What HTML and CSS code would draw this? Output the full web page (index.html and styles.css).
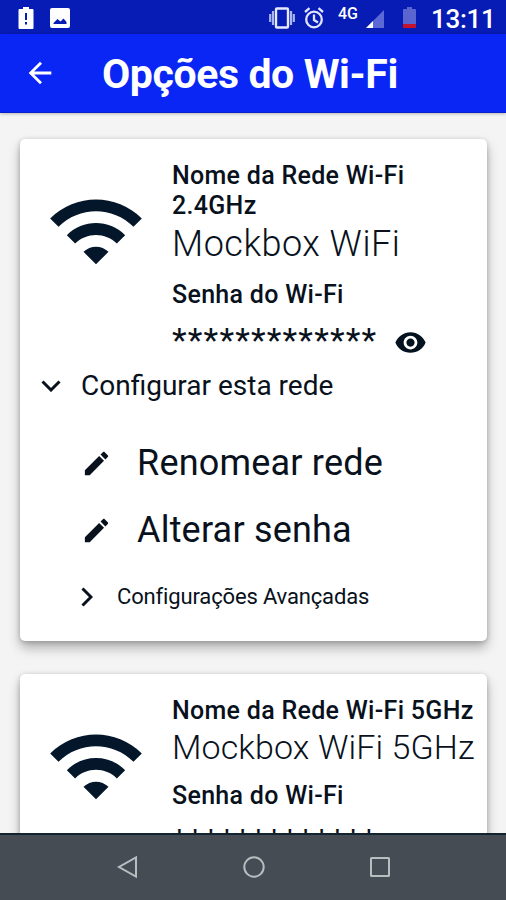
FILE: index.html
```
<!DOCTYPE html>
<html lang="pt-BR">
<head>
    <meta charset="UTF-8">
    <meta name="viewport" content="width=device-width, initial-scale=1.0">
    <title>Opções do Wi-Fi</title>
    <link rel="stylesheet" href="styles.css">
</head>
<body>
    <!-- Status bar -->
    <div class="status-bar">
        <svg class="status-warning" width="16" height="24" viewBox="0 0 16 24">
            <path fill="#fff" fill-rule="evenodd" d="M5 1h6v2h3.500q1 0 1 1v18q0 1-1 1h-13q-1 0-1-1V4q0-1 1-1H5zM7 7v7h2V7zM7 16v2.500h2V16z"/>
        </svg>
        <svg class="status-image" width="20" height="20" viewBox="0 0 20 20">
            <path fill="#fff" fill-rule="evenodd" d="M2 0h16q2 0 2 2v16q0 2-2 2H2q-2 0-2-2V2q0-2 2-2zM3.500 16h13v-2l-3-3.500-3 3-3-2.500-4 4z"/>
        </svg>
        <svg class="status-vibrate" width="26" height="22" viewBox="0 0 26 22">
            <path fill="none" stroke="#a9b6f0" stroke-width="2.200" d="M1.200 7v8M4 4v14M22 4v14M24.800 7v8"/>
            <rect x="7" y="1.500" width="12" height="19" rx="1" fill="none" stroke="#e6eaff" stroke-width="2.400"/>
        </svg>
        <svg class="status-alarm" width="20" height="22" viewBox="0 0 20 22">
            <g fill="none" stroke="#dfe4ff" stroke-width="2.300">
                <circle cx="10" cy="12.500" r="7.800"/>
                <path d="M1 5l4.500-3.800M19 5l-4.500-3.800M10 7.500v5.500l4 2.500"/>
            </g>
        </svg>
        <span class="status-network">4G</span>
        <svg class="status-signal" width="18" height="18" viewBox="0 0 18 18">
            <path fill="#5a69d6" d="M18 0v18H0z"/>
            <path fill="#fff" d="M7 11v7H0z"/>
        </svg>
        <svg class="status-battery" width="13" height="22" viewBox="0 0 13 22">
            <path fill="#5a65cf" d="M4 0h5v2h3q1 0 1 1v14H0V3q0-1 1-1h3z"/>
            <path fill="#c4122f" d="M0 17h13v3q0 1-1 1H1q-1 0-1-1z"/>
        </svg>
        <span class="status-time">13:11</span>
    </div>

    <!-- App bar -->
    <header class="app-bar">
        <svg class="back-icon" width="34" height="34" viewBox="0 0 24 24">
            <path fill="#fff" d="M20 11H7.830l5.590-5.590L12 4l-8 8 8 8 1.410-1.410L7.830 13H20v-2z"/>
        </svg>
        <h1>Opções do Wi-Fi</h1>
    </header>

    <main class="content">
        <section class="card">
            <div class="network">
                <svg class="wifi-icon" width="100" height="100" viewBox="0 0 24 24">
                    <path d="M1 9l2 2c4.970-4.970 13.030-4.970 18 0l2-2C16.930 2.930 7.080 2.930 1 9zm8 8l3 3 3-3c-1.650-1.660-4.340-1.660-6 0zm-4-4l2 2c2.760-2.760 7.240-2.760 10 0l2-2C15.140 9.140 8.870 9.140 5 13z"/>
                </svg>
                <div class="network-info">
                    <p class="label">Nome da Rede Wi-Fi 2.4GHz</p>
                    <p class="value">Mockbox WiFi</p>
                    <p class="label label-password">Senha do Wi-Fi</p>
                    <div class="password">
                        <span class="password-mask">*************</span>
                        <svg class="eye-icon" width="33" height="33" viewBox="0 0 24 24">
                            <path d="M12 4.500C7 4.500 2.730 7.610 1 12c1.730 4.390 6 7.500 11 7.500s9.270-3.110 11-7.500c-1.730-4.390-6-7.500-11-7.500zM12 17c-2.760 0-5-2.240-5-5s2.240-5 5-5 5 2.240 5 5-2.240 5-5 5zm0-8c-1.660 0-3 1.340-3 3s1.340 3 3 3 3-1.340 3-3-1.340-3-3-3z"/>
                        </svg>
                    </div>
                </div>
            </div>

            <div class="config-toggle">
                <svg width="20" height="12" viewBox="0 0 20 12">
                    <path class="chevron" d="M1.500 1.500l8.500 8.500 8.500-8.500"/>
                </svg>
                <span>Configurar esta rede</span>
            </div>

            <ul class="actions">
                <li class="action">
                    <svg width="31" height="31" viewBox="0 0 24 24">
                        <path d="M3 17.250V21h3.750L17.810 9.940l-3.750-3.750L3 17.250zM20.710 7.040c.390-.390.390-1.020 0-1.410l-2.340-2.340c-.390-.390-1.020-.390-1.410 0l-1.830 1.830 3.750 3.750 1.830-1.830z"/>
                    </svg>
                    <span>Renomear rede</span>
                </li>
                <li class="action">
                    <svg width="31" height="31" viewBox="0 0 24 24">
                        <path d="M3 17.250V21h3.750L17.810 9.940l-3.750-3.750L3 17.250zM20.710 7.040c.390-.390.390-1.020 0-1.410l-2.340-2.340c-.390-.390-1.020-.390-1.410 0l-1.830 1.830 3.750 3.750 1.830-1.830z"/>
                    </svg>
                    <span>Alterar senha</span>
                </li>
            </ul>

            <div class="advanced">
                <svg width="12" height="20" viewBox="0 0 12 20">
                    <path class="chevron" d="M1.500 1.500l8.500 8.500-8.500 8.500"/>
                </svg>
                <span>Configurações Avançadas</span>
            </div>
        </section>

        <section class="card">
            <div class="network">
                <svg class="wifi-icon" width="100" height="100" viewBox="0 0 24 24">
                    <path d="M1 9l2 2c4.970-4.970 13.030-4.970 18 0l2-2C16.930 2.930 7.080 2.930 1 9zm8 8l3 3 3-3c-1.650-1.660-4.340-1.660-6 0zm-4-4l2 2c2.760-2.760 7.240-2.760 10 0l2-2C15.140 9.140 8.870 9.140 5 13z"/>
                </svg>
                <div class="network-info">
                    <p class="label">Nome da Rede Wi-Fi 5GHz</p>
                    <p class="value value-long">Mockbox WiFi 5GHz</p>
                    <p class="label label-password">Senha do Wi-Fi</p>
                    <div class="password">
                        <span class="password-mask">*************</span>
                        <svg class="eye-icon" width="33" height="33" viewBox="0 0 24 24">
                            <path d="M12 4.500C7 4.500 2.730 7.610 1 12c1.730 4.390 6 7.500 11 7.500s9.270-3.110 11-7.500c-1.730-4.390-6-7.500-11-7.500zM12 17c-2.760 0-5-2.240-5-5s2.240-5 5-5 5 2.240 5 5-2.240 5-5 5zm0-8c-1.660 0-3 1.340-3 3s1.340 3 3 3 3-1.340 3-3-1.340-3-3-3z"/>
                        </svg>
                    </div>
                </div>
            </div>
        </section>
    </main>

    <!-- Android navigation -->
    <nav class="nav-bar">
        <svg width="24" height="24" viewBox="0 0 24 24">
            <path d="M20 2.500v19L3 12z"/>
        </svg>
        <svg width="24" height="24" viewBox="0 0 24 24">
            <circle cx="12" cy="12" r="9.700"/>
        </svg>
        <svg width="24" height="24" viewBox="0 0 24 24">
            <rect x="3" y="3" width="18" height="18" rx="0.500"/>
        </svg>
    </nav>
</body>
</html>
```
FILE: styles.css
```
* {
    margin: 0;
    padding: 0;
    box-sizing: border-box;
}
body {
    font-family: Roboto, "Liberation Sans", sans-serif;
    background: #f4f4f4;
    color: #08111c;
    height: 100vh;
    display: flex;
    flex-direction: column;
    overflow: hidden;
}
svg {
    display: block;
    flex: none;
}

/* Status bar */
.status-bar {
    flex: none;
    height: 34px;
    background: #071bb5;
    color: #fff;
    display: flex;
    align-items: center;
    padding: 2px 11px 0 18px;
}
.status-image {
    margin-left: 16px;
}
.status-vibrate {
    margin-left: auto;
}
.status-alarm {
    margin-left: 9px;
}
.status-network {
    width: 22px;
    margin: 0 6px 8px 14px;
    font-size: 16px;
    line-height: 18px;
    font-weight: 500;
}
.status-signal {
    margin-top: 2px;
}
.status-battery {
    margin-left: 19px;
}
.status-time {
    width: 64px;
    margin: 2px 0 0 15px;
    font-size: 26px;
    line-height: 30px;
    font-weight: 500;
    letter-spacing: -0.3px;
    white-space: nowrap;
}

/* App bar */
.app-bar {
    flex: none;
    height: 79px;
    background: #0a26f5;
    color: #fff;
    display: flex;
    align-items: center;
    padding-left: 23px;
    border-bottom: 1px solid #0a1ed0;
    box-shadow: 0 1px 3px rgba(0, 0, 0, 0.25);
}
.app-bar h1 {
    margin: 2px 0 0 45px;
    font-size: 41px;
    font-weight: 700;
    line-height: 48px;
    letter-spacing: -0.4px;
}

/* Cards */
.content {
    flex: 1;
    min-height: 0;
    overflow: hidden;
    padding: 26px 19px 0 20px;
}
.card {
    height: 502px;
    margin-bottom: 33px;
    padding-top: 22px;
    background: #fff;
    border-radius: 5px;
    box-shadow: 0 7px 12px rgba(0, 0, 0, 0.28), 0 1px 5px rgba(0, 0, 0, 0.2);
}
.network {
    display: flex;
    align-items: flex-start;
    padding-left: 26px;
}
.wifi-icon {
    margin-top: 20px;
    fill: #04172a;
}
.network-info {
    width: 315px;
    margin-left: 26px;
}
.label {
    font-size: 25px;
    font-weight: 500;
    line-height: 29.5px;
    letter-spacing: 0.3px;
}
.value {
    font-size: 36px;
    font-weight: 300;
    line-height: 49px;
    letter-spacing: 0.5px;
    white-space: nowrap;
}
.value-long {
    font-size: 34px;
    line-height: 42px;
    letter-spacing: 0.1px;
    padding-bottom: 2px;
}
.label-password {
    margin-top: 11px;
}
.password {
    display: flex;
    align-items: center;
    height: 47px;
    margin-top: 9px;
}
.password-mask {
    width: 222px;
    margin-bottom: 4px;
    font-size: 34px;
    line-height: 42px;
    letter-spacing: 1.15px;
}
.eye-icon {
    margin-top: 1px;
    fill: #04111f;
}
.chevron {
    fill: none;
    stroke: #08111c;
    stroke-width: 3;
}
.config-toggle {
    display: flex;
    align-items: center;
    gap: 20px;
    height: 40px;
    padding-left: 21px;
    font-size: 28px;
}
.actions {
    margin-top: 24px;
    list-style: none;
}
.action {
    display: flex;
    align-items: center;
    gap: 25px;
    height: 67px;
    padding-left: 61px;
    font-size: 36px;
    letter-spacing: 0.2px;
}
.action svg {
    fill: #08111c;
}
.advanced {
    display: flex;
    align-items: center;
    gap: 24px;
    height: 66px;
    padding-left: 61px;
    font-size: 22px;
    letter-spacing: -0.15px;
}

/* Android navigation */
.nav-bar {
    flex: none;
    height: 67px;
    background: #454c53;
    border-top: 2px solid #142330;
    display: flex;
    justify-content: center;
    align-items: center;
    gap: 102px;
    padding: 0 0 2px 1px;
}
.nav-bar svg {
    fill: none;
    stroke: #b9bdc0;
    stroke-width: 2;
}
```
